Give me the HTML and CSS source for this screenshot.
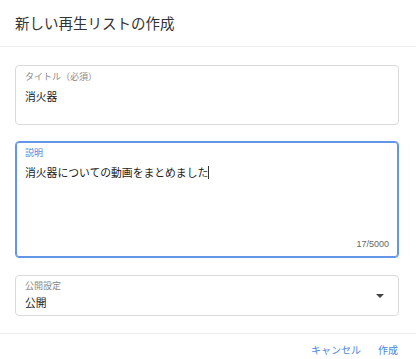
FILE: index.html
```html
<!DOCTYPE html>
<html lang="ja">
<head>
    <meta charset="UTF-8">
    <meta name="viewport" content="width=device-width, initial-scale=1.0">
    <title>新しい再生リストの作成</title>
    <link rel="stylesheet" href="styles.css">
</head>
<body>
    <div class="dialog">
        <!-- Header -->
        <header class="dialog-header">
            <h1>新しい再生リストの作成</h1>
        </header>

        <!-- Fields -->
        <div class="dialog-body">
            <div class="field field-title">
                <div class="field-label">タイトル（必須）</div>
                <div class="field-value">消火器</div>
            </div>

            <div class="field field-desc focused">
                <div class="field-label">説明</div>
                <div class="field-value">消火器についての動画をまとめました<span class="caret"></span></div>
                <div class="field-counter">17/5000</div>
            </div>

            <div class="field field-select">
                <div class="select-text">
                    <div class="field-label">公開設定</div>
                    <div class="field-value">公開</div>
                </div>
                <span class="select-arrow"></span>
            </div>
        </div>

        <!-- Actions -->
        <footer class="dialog-actions">
            <button class="btn-text">キャンセル</button>
            <button class="btn-text">作成</button>
        </footer>
    </div>
</body>
</html>
```

FILE: styles.css
```css
/* General Styling */
* {
    margin: 0;
    padding: 0;
    box-sizing: border-box;
}
body {
    font-family: "Noto Sans CJK JP", "Noto Sans", sans-serif;
    background-color: #fff;
    color: #333;
}

/* Header */
.dialog-header {
    height: 47px;
    display: flex;
    align-items: center;
    padding-left: 15px;
    border-bottom: 1px solid #ececec;
}
.dialog-header h1 {
    font-size: 14.5px;
    font-weight: 400;
    color: #333;
    line-height: 20px;
}

/* Fields */
.dialog-body {
    display: flex;
    flex-direction: column;
    padding: 18px 17px 17px 15px;
}
.field {
    border: 1px solid #dadada;
    border-radius: 4px;
    padding: 5px 9px 0;
}
.field-label {
    font-size: 9px;
    line-height: 11px;
    color: #8a8a8a;
}
.field-value {
    font-size: 10.8px;
    line-height: 18px;
    color: #222;
    margin-top: 5px;
}

.field-title {
    height: 60px;
}

.field-desc {
    height: 117px;
    margin-top: 16px;
    display: flex;
    flex-direction: column;
    padding-bottom: 7px;
}
.field.focused {
    border-color: #6396e8;
    box-shadow: inset 0 0 0 1px #6396e8;
}
.field.focused .field-label {
    color: #4f89e6;
}
.caret {
    display: inline-block;
    width: 1px;
    height: 13px;
    background-color: #333;
    vertical-align: -2px;
}
.field-counter {
    margin-top: auto;
    text-align: right;
    font-family: "Liberation Sans", sans-serif;
    font-size: 9px;
    line-height: 11px;
    color: #666;
}

.field-select {
    height: 41px;
    margin-top: 17px;
    padding: 4px 14px 0 9px;
    display: flex;
    align-items: center;
}
.select-text {
    flex: 1;
    align-self: flex-start;
}
.field-select .field-value {
    margin-top: 2px;
}
.select-arrow {
    width: 0;
    height: 0;
    border-left: 4.5px solid transparent;
    border-right: 4.5px solid transparent;
    border-top: 4px solid #444;
    margin-top: -3px;
}

/* Actions */
.dialog-actions {
    border-top: 1px solid #ececec;
    display: flex;
    justify-content: flex-end;
    gap: 17px;
    padding: 9px 18px 0 0;
}
.btn-text {
    background: none;
    border: none;
    font-family: inherit;
    font-size: 10px;
    line-height: 14px;
    color: #4a86e0;
    cursor: pointer;
}
```
